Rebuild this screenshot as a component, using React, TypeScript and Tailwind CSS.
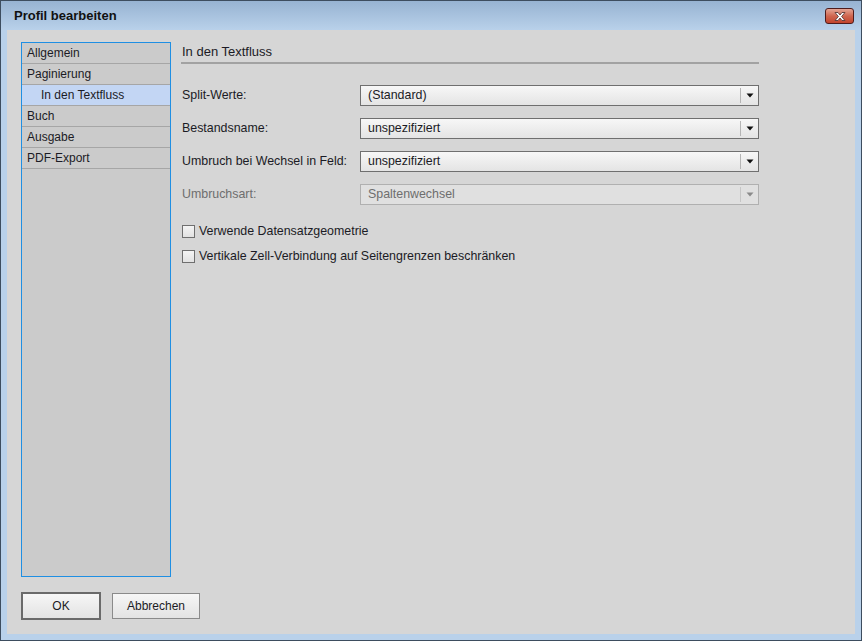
import React from "react";

const font = { fontFamily: '"Liberation Sans", Arial, sans-serif' };

function Select({ value, disabled }: { value: string; disabled?: boolean }) {
  return (
    <div
      className={
        "flex h-[21px] w-[399px] items-center border " +
        (disabled
          ? "border-[#b0b0b0] bg-[#e0e0e0] text-[#6e6e6e]"
          : "border-[#6f6f6f] bg-gradient-to-b from-[#f7f7f7] to-[#e4e4e4] text-[#1b1b25]")
      }
    >
      <span className="flex-1 pl-[7px] text-[12.4px]">{value}</span>
      <div className={"h-[15px] w-px " + (disabled ? "bg-[#c6c6c6]" : "bg-[#b5b5b5]")} />
      <div className="flex w-[17px] justify-center">
        <svg width="8" height="5" viewBox="0 0 8 5">
          <path d="M0.5 0.5 L7.5 0.5 L4 4.5 Z" fill={disabled ? "#8a8a8a" : "#111"} />
        </svg>
      </div>
    </div>
  );
}

function Row({ label, value, disabled }: { label: string; value: string; disabled?: boolean }) {
  return (
    <div className="flex h-[21px] items-center">
      <span className={"w-[179px] pl-px text-[12.4px] " + (disabled ? "text-[#6e6e6e]" : "text-[#1b1b25]")}>
        {label}
      </span>
      <Select value={value} disabled={disabled} />
    </div>
  );
}

function Check({ label }: { label: string }) {
  return (
    <div className="flex h-[13px] items-center">
      <div className="ml-px h-[13px] w-[13px] border border-[#6f6f6f] bg-gradient-to-b from-[#f4f4f4] to-[#e2e2e2]" />
      <span className="ml-[4px] text-[12.4px] text-[#1b1b25]">{label}</span>
    </div>
  );
}

const navItems = [
  { label: "Allgemein" },
  { label: "Paginierung" },
  { label: "In den Textfluss", sub: true, active: true },
  { label: "Buch" },
  { label: "Ausgabe" },
  { label: "PDF-Export" },
];

export default function App() {
  return (
    <div
      style={font}
      className="flex h-[641px] w-[862px] flex-col border border-[#3d4d5f] bg-[#b9d1ea]"
    >
      {/* title bar */}
      <div className="flex h-[29px] items-center justify-between bg-gradient-to-b from-[#97b3d2] to-[#b9d1ea] pl-[13px] pr-[7px]">
        <span className="text-[13px] font-bold text-[#111]">Profil bearbeiten</span>
        <div className="mt-[1px] flex h-[16px] w-[29px] items-center justify-center rounded-[3px] border border-[#4e1c1c] bg-gradient-to-b from-[#e4a595] via-[#cf6650] to-[#c2432c]">
          <svg width="14" height="11" viewBox="0 0 14 11">
            <path
              d="M2 1.5 L5 1.5 L7 4 L9 1.5 L12 1.5 L8.6 5.5 L12 9.5 L9 9.5 L7 7 L5 9.5 L2 9.5 L5.4 5.5 Z"
              fill="#fff"
              stroke="#5a3a3a"
              strokeWidth="0.9"
            />
          </svg>
        </div>
      </div>

      {/* client area */}
      <div className="mx-[6px] mb-[6px] flex flex-1 flex-col bg-[#d6d6d6] pl-[14px] pt-[12px]">
        <div className="flex h-[535px]">
          <div className="w-[150px] border border-[#1f8fe3] bg-[#cbcbcb]">
            {navItems.map((it) => (
              <div
                key={it.label}
                className={
                  "flex h-[21px] items-center border-b border-[#a6a6a6] text-[12px] text-[#1b1b25] " +
                  (it.sub ? "pl-[19px] " : "pl-[5px] ") +
                  (it.active ? "bg-[#c3d6f4]" : "")
                }
              >
                {it.label}
              </div>
            ))}
          </div>

          <div className="ml-[10px] flex w-[578px] flex-col">
            <div className="flex h-[22px] items-center border-b-2 border-[#a2a2a2] pl-px text-[13px] text-[#1b1b25]">
              In den Textfluss
            </div>
            <div className="mt-[21px] flex flex-col gap-[12px]">
              <Row label="Split-Werte:" value="(Standard)" />
              <Row label="Bestandsname:" value="unspezifiziert" />
              <Row label="Umbruch bei Wechsel in Feld:" value="unspezifiziert" />
              <Row label="Umbruchsart:" value="Spaltenwechsel" disabled />
            </div>
            <div className="mt-[20px] flex flex-col gap-[12px]">
              <Check label="Verwende Datensatzgeometrie" />
              <Check label="Vertikale Zell-Verbindung auf Seitengrenzen beschränken" />
            </div>
          </div>
        </div>

        <div className="mt-[15px] flex items-center gap-[11px]">
          <button className="h-[28px] w-[80px] border-2 border-[#6a6a6a] bg-gradient-to-b from-[#f6f6f6] to-[#e3e3e3] text-[12px] text-[#1b1b25]">
            OK
          </button>
          <button className="h-[26px] w-[88px] border border-[#8a8a8a] bg-gradient-to-b from-[#f6f6f6] to-[#e3e3e3] text-[12px] text-[#1b1b25]">
            Abbrechen
          </button>
        </div>
      </div>
    </div>
  );
}
